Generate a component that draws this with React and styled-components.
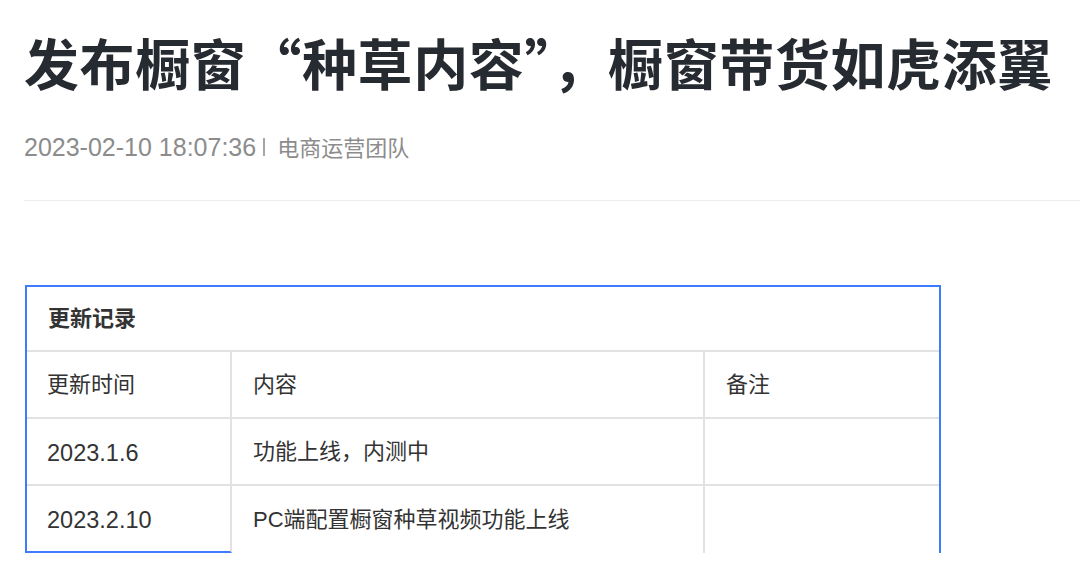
import styled, { createGlobalStyle } from "styled-components";

const GlobalStyle = createGlobalStyle`
  html, body {
    margin: 0;
    padding: 0;
    background: #ffffff;
  }

  body {
    font-family: "Liberation Sans", "Noto Sans CJK SC", sans-serif;
    -webkit-font-smoothing: antialiased;
  }
`;

const Page = styled.div`
  display: flex;
  flex-direction: column;
  padding: 19px 0 0 24px;
  height: 569px;
  box-sizing: border-box;
  overflow: hidden;
`;

const Title = styled.h1`
  margin: 0;
  font-family: "Noto Sans CJK SC", sans-serif;
  font-size: 55px;
  font-weight: 700;
  letter-spacing: 0.6px;
  line-height: 84px;
  color: #262a31;
  white-space: nowrap;
`;

const Meta = styled.div`
  display: flex;
  align-items: center;
  margin-top: 29px;
  height: 30px;
  line-height: 30px;
  color: #8c8c8c;
`;

const Stamp = styled.span`
  font-family: "Liberation Sans", sans-serif;
  font-size: 25px;
`;

const Bar = styled.span`
  width: 2px;
  height: 18px;
  margin: 0 12px 0 7px;
  background: #a6a6a6;
`;

const Author = styled.span`
  font-family: "Noto Sans CJK SC", sans-serif;
  font-size: 22px;
  position: relative;
  top: -1px;
`;

const Divider = styled.hr`
  margin: 38px 0 0 0;
  border: 0;
  border-top: 1px solid #ececec;
`;

const Table = styled.div`
  display: grid;
  grid-template-columns: 205px 473px 234px;
  width: 916px;
  margin: 84px 0 0 1px;
  border: 2px solid #3d7bff;
  border-bottom: 0;
  box-sizing: border-box;
`;

const Cell = styled.div`
  display: flex;
  align-items: center;
  height: ${(p) => (p.$span ? "65px" : "67px")};
  padding-left: ${(p) => (p.$first ? "20px" : "21px")};
  box-sizing: border-box;
  font-family: "Liberation Sans", "Noto Sans CJK SC", sans-serif;
  font-size: 22px;
  line-height: 30px;
  font-weight: ${(p) => (p.$head ? 700 : 400)};
  color: #333333;
  grid-column: ${(p) => (p.$span ? "1 / -1" : "auto")};
  border-right: ${(p) => (p.$last ? "0" : "2px solid #e2e2e5")};
  border-bottom: ${(p) =>
    p.$blueBottom ? "2px solid #3d7bff" : p.$open ? "0" : "2px solid #e2e2e5"};
`;

const CellText = styled.span`
  display: block;
  line-height: 30px;
  font-size: ${(p) => (p.$latin ? "23.5px" : "22px")};
  transform: translateY(${(p) => (p.$latin ? "1px" : "0")});
`;

const rows = [
  ["更新时间", "内容", "备注"],
  ["2023.1.6", "功能上线，内测中", ""],
  ["2023.2.10", "PC端配置橱窗种草视频功能上线", ""],
];

const App = () => {
  return (
    <>
      <GlobalStyle />
      <Page>
        <Title>发布橱窗“种草内容”，橱窗带货如虎添翼</Title>
        <Meta>
          <Stamp>2023-02-10 18:07:36</Stamp>
          <Bar />
          <Author>电商运营团队</Author>
        </Meta>
        <Divider />
        <Table>
          <Cell $head $span $last>
            <CellText>更新记录</CellText>
          </Cell>
          {rows.map((row, r) =>
            row.map((text, c) => {
              const lastRow = r === rows.length - 1;
              return (
                <Cell
                  key={`${r}-${c}`}
                  $first={c === 0}
                  $last={c === row.length - 1}
                  $blueBottom={lastRow && c === 0}
                  $open={lastRow && c !== 0}
                >
                  <CellText $latin={/^[\d.]+$/.test(text)}>{text}</CellText>
                </Cell>
              );
            })
          )}
        </Table>
      </Page>
    </>
  );
};

export default App;
